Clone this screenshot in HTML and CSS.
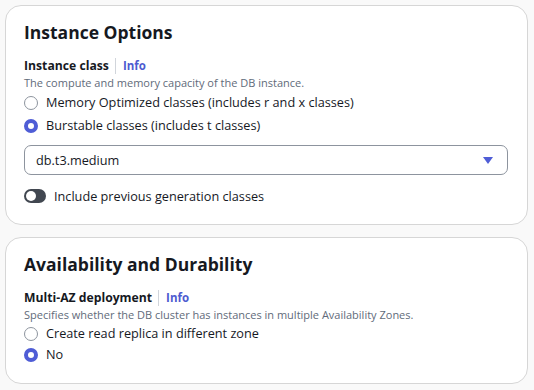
FILE: index.html
```html
<!DOCTYPE html>
<html lang="en">

<head>
    <meta charset="UTF-8">
    <meta name="viewport" content="width=device-width, initial-scale=1.0">
    <title>Create database</title>
    <link rel="stylesheet" href="styles.css">
</head>

<body>
    <!-- Instance options -->
    <div class="panel">
        <h2 class="panel-title">Instance Options</h2>
        <div class="field-label">
            <span>Instance class</span>
            <span class="divider"></span>
            <a href="#" class="info">Info</a>
        </div>
        <p class="field-desc">The compute and memory capacity of the DB instance.</p>
        <div class="radio-group">
            <label class="radio"><span class="radio-dot"></span>Memory Optimized classes (includes r and x classes)</label>
            <label class="radio"><span class="radio-dot checked"></span>Burstable classes (includes t classes)</label>
        </div>
        <div class="select">
            <span>db.t3.medium</span>
            <svg class="caret" width="12" height="9" viewBox="0 0 12 9">
                <path d="M1 1h10L6 8z" fill="#4f5dd6" />
            </svg>
        </div>
        <div class="toggle-row">
            <span class="toggle"><span class="toggle-knob"></span></span>
            <span>Include previous generation classes</span>
        </div>
    </div>

    <!-- Availability -->
    <div class="panel">
        <h2 class="panel-title">Availability and Durability</h2>
        <div class="field-label">
            <span>Multi-AZ deployment</span>
            <span class="divider"></span>
            <a href="#" class="info">Info</a>
        </div>
        <p class="field-desc">Specifies whether the DB cluster has instances in multiple Availability Zones.</p>
        <div class="radio-group compact">
            <label class="radio"><span class="radio-dot"></span>Create read replica in different zone</label>
            <label class="radio"><span class="radio-dot checked"></span>No</label>
        </div>
    </div>
</body>

</html>
```

FILE: styles.css
```css
/* Reset */
* {
    margin: 0;
    padding: 0;
    box-sizing: border-box;
}

body {
    background-color: #f9f9f9;
    font-family: "Open Sans", "Noto Sans", sans-serif;
    color: #16191f;
    padding: 5px 6px 0 5px;
}

/* Cards */
.panel {
    background-color: #fff;
    border: 1px solid #d6d6d6;
    border-radius: 16px;
    padding: 12px 19px 15px 18px;
    margin-bottom: 12px;
}

.panel:last-child {
    padding-bottom: 18px;
}

.panel-title {
    font-size: 17.5px;
    font-weight: 700;
    line-height: 28px;
    margin-bottom: 11px;
}

/* Field header */
.field-label {
    display: flex;
    align-items: center;
    font-size: 12.2px;
    font-weight: 700;
    line-height: 18px;
}

.divider {
    width: 1px;
    height: 16px;
    background-color: #d1d5db;
    margin: 0 7px 0 6px;
}

.info {
    color: #4d5bd0;
    text-decoration: none;
    font-size: 11.5px;
}

.field-desc {
    font-size: 11px;
    line-height: 16px;
    color: #5f6b7a;
}

/* Radios */
.radio {
    display: flex;
    align-items: center;
    font-size: 12.7px;
    line-height: 23px;
}

.compact .radio {
    line-height: 21px;
}

.radio-dot {
    width: 14px;
    height: 14px;
    border-radius: 50%;
    border: 1.5px solid #8d949e;
    margin-right: 8px;
    flex-shrink: 0;
}

.radio-dot.checked {
    border: 4px solid #4f5dd6;
}

/* Select */
.select {
    display: flex;
    align-items: center;
    justify-content: space-between;
    height: 30px;
    border: 1px solid #8d949e;
    border-radius: 7px;
    padding: 0 13px 0 11px;
    margin-top: 8px;
    font-size: 12.7px;
}

/* Toggle */
.toggle-row {
    display: flex;
    align-items: center;
    margin-top: 11px;
    margin-bottom: 3px;
    font-size: 12.7px;
    line-height: 20px;
}

.toggle {
    width: 22px;
    height: 14px;
    border-radius: 7px;
    background-color: #414750;
    margin-right: 8px;
    padding: 2px;
    display: flex;
}

.toggle-knob {
    width: 10px;
    height: 10px;
    border-radius: 50%;
    background-color: #fff;
}
```
